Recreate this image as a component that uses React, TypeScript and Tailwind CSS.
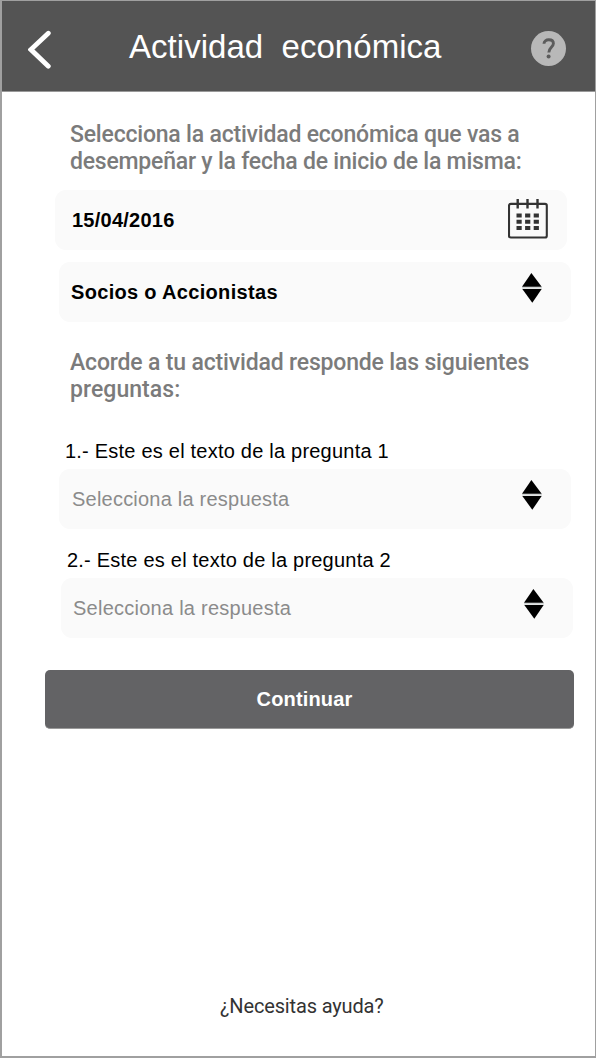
import type { ReactNode } from "react";

function SortIcon() {
  return (
    <svg width="20" height="30" viewBox="0 0 20 30" className="shrink-0">
      <path d="M9.4 0L19.7 13.7H0Z" fill="#000" />
      <path d="M0 14.8H20" stroke="#d0d4d4" strokeWidth="1.6" />
      <path d="M.3 16H19.7L10.3 29.8Z" fill="#000" />
    </svg>
  );
}

function CalendarIcon() {
  return (
    <svg width="40" height="40" viewBox="0 0 40 40" className="shrink-0" fill="none">
      <rect x="1" y="4.9" width="37.8" height="33.6" rx="1.8" stroke="#333" strokeWidth="2.1" />
      <path d="M9.7 0V9.6M19.5 0V9.6M29.5 0V9.6" stroke="#333" strokeWidth="2.4" />
      <path d="M8.5 16.6h5.2m3.4 0h5.2m3.4 0h5.2M8.5 22.8h5.2m3.4 0h5.2m3.4 0h5.2M8.5 29h5.2m3.4 0h5.2m3.4 0h5.2" stroke="#333" strokeWidth="4" />
    </svg>
  );
}

function Field({ children, icon, className }: { children: ReactNode; icon: ReactNode; className: string }) {
  return (
    <div className={`flex h-[60px] w-[512px] justify-between rounded-[11px] bg-[#fafafa] text-xl leading-[60px] whitespace-nowrap ${className}`}>
      {children}
      {icon}
    </div>
  );
}

export default function App() {
  return (
    <div className="h-[1058px] w-[596px] overflow-hidden bg-[#a0a0a0] pt-px pr-px pb-[2px] pl-[2px] font-['Liberation_Sans',sans-serif]">
      <div className="flex h-full flex-col bg-white">
        <header className="flex h-[91px] shrink-0 items-start border-b border-[#999] bg-[#545454] pt-[29px] pr-[29px] pl-[26px] text-white">
          <svg width="23" height="39" viewBox="0 0 23 39" fill="none" className="shrink-0">
            <path d="M20.3 3.2L2.9 19.6L20.3 36.2" stroke="#fff" strokeWidth="4.8" strokeLinecap="round" />
          </svg>
          <h1 className="ml-[78px] text-[33px] leading-[34px] tracking-[0.03px] whitespace-pre">Actividad  económica</h1>
          <span className="mt-px ml-auto flex size-[35px] items-center justify-center rounded-full bg-[#b8b8b8]">
            <svg width="14" height="21" viewBox="0 0 14 21" fill="none">
              <path d="M2 5.8C2 3.2 4.2 1.8 6.8 1.8S11.4 3.2 11.4 5.6C11.4 9 6.8 9.8 6.8 14.4" stroke="#5c5c5c" strokeWidth="2.9" />
              <circle cx="6.6" cy="18.4" r="2" fill="#5c5c5c" />
            </svg>
          </span>
        </header>

        <main className="flex flex-1 flex-col items-start">
          <p className="mt-[29px] ml-[68px] font-['Roboto',sans-serif] text-[23px] leading-[27px] font-medium whitespace-nowrap text-[#7b7b7b]">
            <span className="block tracking-[-0.2px]">Selecciona la actividad económica que vas a</span>
            <span className="block tracking-[-0.22px]">desempeñar y la fecha de inicio de la misma:</span>
          </p>
          <Field className="mt-[15px] ml-[53px] pr-[19px] pl-[17px] font-bold" icon={<span className="pt-[9px]"><CalendarIcon /></span>}>
            <span className="tracking-[0.25px]">15/04/2016</span>
          </Field>
          <Field className="mt-3 ml-[57px] pr-[29px] pl-[12px] font-bold" icon={<span className="pt-[11px]"><SortIcon /></span>}>
            <span className="tracking-[0.32px]">Socios o Accionistas</span>
          </Field>
          <p className="mt-[27px] ml-[68px] font-['Roboto',sans-serif] text-[23px] leading-[27px] font-medium whitespace-nowrap text-[#7b7b7b]">
            <span className="block tracking-[-0.17px]">Acorde a tu actividad responde las siguientes</span>
            <span className="block tracking-[0.05px]">preguntas:</span>
          </p>
          <label className="mt-9 ml-[63px] text-xl leading-[24px] tracking-[0.22px] whitespace-nowrap">1.- Este es el texto de la pregunta 1</label>
          <Field className="mt-[6px] ml-[57px] pr-[29px] pl-[13px]" icon={<span className="pt-[11px]"><SortIcon /></span>}>
            <span className="tracking-[0.22px] text-[#8b8b8b]">Selecciona la respuesta</span>
          </Field>
          <label className="mt-[19px] ml-[65px] text-xl leading-[24px] tracking-[0.22px] whitespace-nowrap">2.- Este es el texto de la pregunta 2</label>
          <Field className="mt-[6px] ml-[59px] pr-[29px] pl-[12px]" icon={<span className="pt-[11px]"><SortIcon /></span>}>
            <span className="tracking-[0.25px] text-[#8b8b8b]">Selecciona la respuesta</span>
          </Field>
          <button className="mt-8 ml-[43px] h-[59px] w-[529px] rounded-[5px] border-b border-[#9a9a9a] bg-[#636365] pr-[10px] text-xl leading-[58px] font-bold tracking-[0.15px] text-white">
            Continuar
          </button>
        </main>
        <footer className="mb-[38px] ml-[218px] shrink-0 font-['Roboto',sans-serif] text-[20px] leading-6 tracking-[-0.15px] whitespace-nowrap text-[#333]">
          ¿Necesitas ayuda?
        </footer>
      </div>
    </div>
  );
}
